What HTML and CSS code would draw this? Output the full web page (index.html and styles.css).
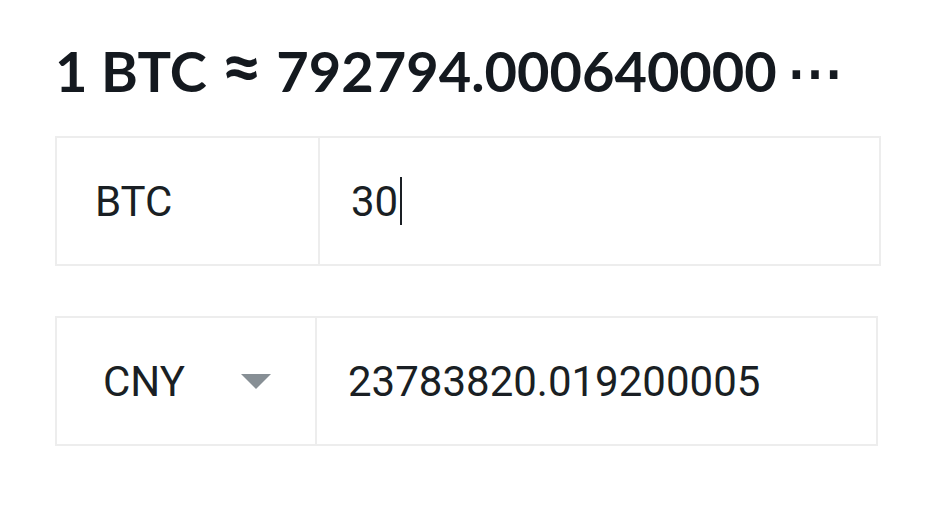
FILE: index.html
```html
<!DOCTYPE html>
<html>
<head>
<meta charset="utf-8">
<link rel="stylesheet" href="styles.css">
</head>
<body>
<div class="page">
  <h1 class="rate"><span>1 BTC <span class="approx">≈</span> 792794.000640000</span><span class="more">⋯</span></h1>
  <div class="row row-top">
    <div class="cell label btc">BTC</div>
    <div class="cell value"><span>30</span><span class="caret"></span></div>
  </div>
  <div class="row row-bottom">
    <div class="cell label cny"><span>CNY</span><span class="tri"></span></div>
    <div class="cell value">23783820.019200005</div>
  </div>
</div>
</body>
</html>
```

FILE: styles.css
```css
html, body {
  margin: 0;
  padding: 0;
  background: #ffffff;
}
.page {
  padding: 30px 0 0 55px;
  font-family: Roboto, "Liberation Sans", sans-serif;
  color: #1a1f24;
}
.rate {
  margin: 0 0 24px 0;
  height: 82px;
  display: flex;
  align-items: center;
  font-family: Lato, "Liberation Sans", sans-serif;
  font-weight: 700;
  font-size: 56px;
  line-height: 64px;
  color: #14191f;
  white-space: nowrap;
}
.approx {
  font-size: 1.3em;
  line-height: 0;
  vertical-align: -0.02em;
}
.more {
  margin-left: 10px;
}
.row {
  display: flex;
  height: 126px;
  border: 2px solid #ededed;
  box-sizing: content-box;
}
.row-top {
  width: 822px;
}
.row-bottom {
  width: 819px;
  margin-top: 50px;
}
.cell {
  display: flex;
  align-items: center;
  font-size: 42px;
}
.label {
  border-right: 2px solid #ededed;
}
.btc {
  width: 263px;
  padding-left: 38px;
  box-sizing: border-box;
}
.cny {
  width: 260px;
  padding-left: 46px;
  box-sizing: border-box;
}
.tri {
  width: 0;
  height: 0;
  margin-left: 56px;
  border-left: 15px solid transparent;
  border-right: 15px solid transparent;
  border-top: 15px solid #878f95;
}
.value {
  flex: 1;
  padding-left: 31px;
}
.caret {
  display: inline-block;
  width: 1.5px;
  height: 48px;
  background: #1a1f24;
  margin-left: 2px;
}
```
